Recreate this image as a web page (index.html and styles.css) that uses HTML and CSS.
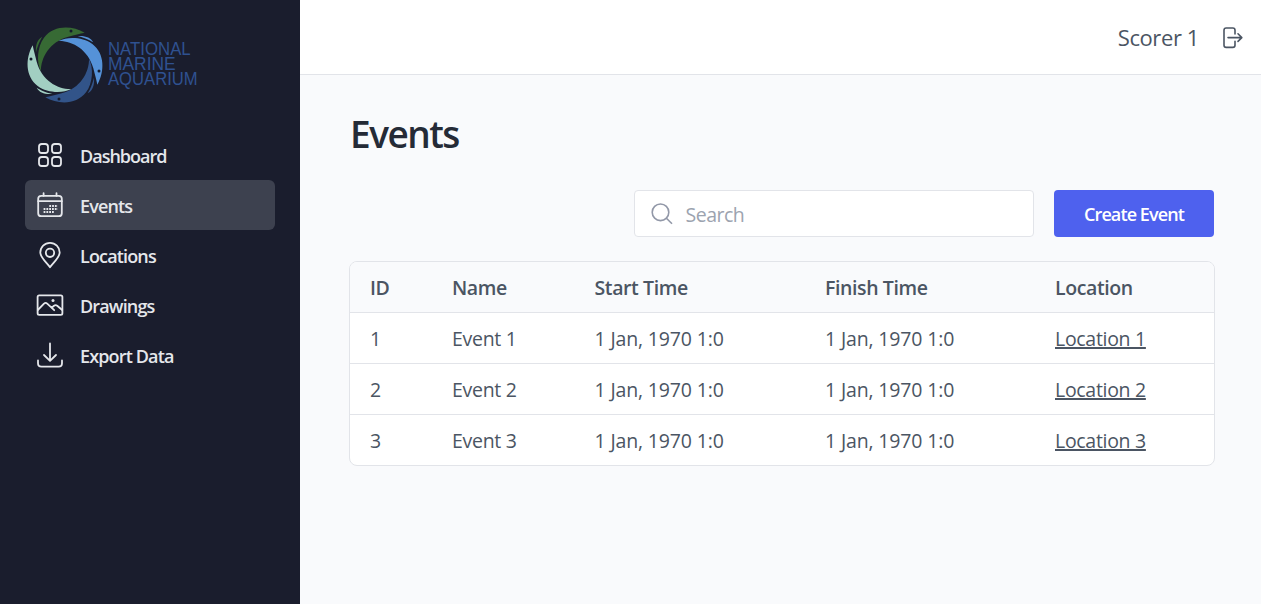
FILE: index.html
```html
<!DOCTYPE html>
<html lang="en">
<head>
<meta charset="utf-8">
<title>Events</title>
<link rel="stylesheet" href="styles.css">
</head>
<body>
<div class="app">
  <aside class="sidebar">
    <svg class="logo" viewBox="0 0 600 300" role="img" aria-label="National Marine Aquarium">
      <defs>
        <g id="fish">
          <path d="M59 -97C20 -119 -34 -120 -63 -82C-84 -54 -86 -8 -72 19C-73 -22 -46 -70 10 -85C30 -90 44 -94 59 -97Z"/>
          <path d="M-87 -38C-89 -60 -83 -77 -68 -85C-76 -72 -81 -60 -87 -38Z"/>
          <circle cx="18" cy="-102" r="4.5" fill="#151a2c"/>
        </g>
      </defs>
      <g transform="translate(150 150)">
        <use href="#fish" fill="#376a34"/>
        <use href="#fish" fill="#5592d8" transform="rotate(90)"/>
        <use href="#fish" fill="#325489" transform="rotate(180)"/>
        <use href="#fish" fill="#a2cfc2" transform="rotate(270)"/>
      </g>
      <g class="logo-text">
        <text x="279" y="120" textLength="248" lengthAdjust="spacingAndGlyphs">NATIONAL</text>
        <text x="279" y="166" textLength="203" lengthAdjust="spacingAndGlyphs">MARINE</text>
        <text x="279" y="211" textLength="269" lengthAdjust="spacingAndGlyphs">AQUARIUM</text>
      </g>
    </svg>
    <nav class="nav">
      <a class="nav-item">
        <svg class="icon" viewBox="0 0 30 30"><rect x="4" y="4" width="9" height="9" rx="2.8"/><rect x="17" y="4" width="9" height="9" rx="2.8"/><rect x="4" y="17" width="9" height="9" rx="2.8"/><rect x="17" y="17" width="9" height="9" rx="2.8"/></svg>
        <span class="w-dashboard">Dashboard</span>
      </a>
      <a class="nav-item active">
        <svg class="icon" viewBox="0 0 30 30"><rect x="3.2" y="5.8" width="23.6" height="20.4" rx="3"/><path d="M3.2 11.2H26.8M8.6 3.2V5.8M21.5 3.2V5.8"/><path class="dots" d="M14.3 16H22.8M8.6 19H22.8M8.6 22H19.8"/></svg>
        <span>Events</span>
      </a>
      <a class="nav-item">
        <svg class="icon" viewBox="0 0 30 30"><path d="M15 27.3C12 23 5.3 17.5 5.3 12.5A9.7 9.7 0 0 1 24.7 12.5C24.7 17.5 18 23 15 27.3Z"/><circle cx="15" cy="12.8" r="4.2"/></svg>
        <span>Locations</span>
      </a>
      <a class="nav-item">
        <svg class="icon" viewBox="0 0 30 30"><rect x="2.6" y="5.3" width="24.8" height="19.6" rx="1.6"/><path d="M2.8 20L9 13.6Q10.6 12.1 12.2 13.6L19.2 20.2M16.6 17.8L19 15.8Q20.6 14.6 22.2 15.7L27.2 20"/><circle class="solid" cx="18" cy="10.5" r="1.5"/></svg>
        <span>Drawings</span>
      </a>
      <a class="nav-item">
        <svg class="icon" viewBox="0 0 30 30"><path d="M15 3.4V20.6M9 15L15 20.8L21 15M3 20.5V23.2Q3 26.6 6.4 26.6H23.6Q27 26.6 27 23.2V20.5"/></svg>
        <span>Export Data</span>
      </a>
    </nav>
  </aside>
  <div class="content">
    <header class="topbar">
      <span class="user">Scorer 1</span>
      <svg class="logout" viewBox="0 0 22 24"><path d="M13 8V4.2Q13 2 10.8 2H4.2Q2 2 2 4.2V19.2Q2 21.4 4.2 21.4H10.8Q13 21.4 13 19.2V15.2M6 11.6H19.6M16 7.8L19.8 11.6L16 15.4"/></svg>
    </header>
    <main class="main">
      <h1 class="title">Events</h1>
      <div class="toolbar">
        <label class="search">
          <svg class="search-icon" viewBox="0 0 22 22"><circle cx="9.5" cy="9.3" r="8.3"/><path d="M15.4 15.2L21 20.8"/></svg>
          <span>Search</span>
        </label>
        <button class="create">Create Event</button>
      </div>
      <div class="table">
        <div class="row head"><span>ID</span><span>Name</span><span>Start Time</span><span>Finish Time</span><span>Location</span></div>
        <div class="row"><span>1</span><span>Event 1</span><span class="date">1 Jan, 1970 1:0</span><span class="date">1 Jan, 1970 1:0</span><a>Location 1</a></div>
        <div class="row"><span>2</span><span>Event 2</span><span class="date">1 Jan, 1970 1:0</span><span class="date">1 Jan, 1970 1:0</span><a>Location 2</a></div>
        <div class="row"><span>3</span><span>Event 3</span><span class="date">1 Jan, 1970 1:0</span><span class="date">1 Jan, 1970 1:0</span><a>Location 3</a></div>
      </div>
    </main>
  </div>
</div>
</body>
</html>
```
FILE: styles.css
```css
* { box-sizing: border-box; }
body {
  margin: 0;
  font-family: "Open Sans", "Noto Sans", sans-serif;
  color: #4b5563;
  background: #f9fafc;
}
.app { display: flex; height: 604px; }
.sidebar {
  width: 300px;
  flex: none;
  padding: 15px 25px 0 15px;
  background: #1a1d2d;
}
.logo { display: block; width: 200px; height: 100px; }
.logo-text {
  font-family: "Liberation Sans", sans-serif;
  font-size: 54px;
  fill: #2f5190;
}
.nav { margin: 15px 0 0 10px; }
.nav-item {
  display: flex;
  align-items: center;
  gap: 15px;
  height: 50px;
  padding: 2px 10px 0;
  border-radius: 6px;
  color: #e5e7eb;
  font-size: 18px;
  font-weight: 600;
  letter-spacing: -0.85px;
}
.w-dashboard { letter-spacing: -1px; }
.active { background: #3d414f; }
.icon {
  width: 30px;
  height: 30px;
  margin-top: -2px;
  fill: none;
  stroke: currentColor;
  stroke-width: 1.8;
  stroke-linecap: round;
  stroke-linejoin: round;
}
.icon .dots { stroke-width: 1.8; stroke-dasharray: 1.8 1; stroke-linecap: butt; }
.icon .solid { fill: currentColor; stroke: none; }
.content { flex: 1; }
.topbar {
  display: flex;
  align-items: center;
  justify-content: flex-end;
  gap: 24px;
  height: 75px;
  padding: 1px 17px 0 0;
  border-bottom: 1px solid #e2e4e9;
  background: #fff;
}
.user { margin: 0 -1px 2px 0; font-size: 22px; letter-spacing: -0.4px; }
.logout {
  width: 22px;
  height: 24px;
  fill: none;
  stroke: #4b5563;
  stroke-width: 1.6;
  stroke-linecap: round;
  stroke-linejoin: round;
}
.main { padding: 29px 46px 0 49px; }
.title {
  margin: 0 0 26px 1px;
  font-size: 37px;
  line-height: 60px;
  font-weight: 600;
  letter-spacing: -1.5px;
  color: #252b37;
}
.toolbar {
  display: flex;
  justify-content: flex-end;
  gap: 20px;
  padding-right: 1px;
  margin-bottom: 24px;
}
.search {
  display: flex;
  align-items: center;
  gap: 13px;
  width: 400px;
  height: 47px;
  padding: 2px 16px 0 15.5px;
  border: 1px solid #e2e4e9;
  border-radius: 4px;
  background: #fff;
  color: #9ca3af;
  font-size: 19.5px;
  letter-spacing: -0.5px;
}
.search-icon {
  width: 22px;
  height: 22px;
  margin-top: -2px;
  fill: none;
  stroke: #9298a8;
  stroke-width: 1.6;
}
.create {
  width: 160px;
  height: 47px;
  padding: 0;
  border: 0;
  border-radius: 4px;
  background: #4e61ee;
  color: #fff;
  font: 600 18px "Open Sans", sans-serif;
  letter-spacing: -0.9px;
}
.table {
  border: 1px solid #e2e4e9;
  border-radius: 8px;
  background: #fff;
  overflow: hidden;
}
.row {
  display: grid;
  grid-template-columns: 82px 142.5px 230.5px 230px 1fr;
  align-items: center;
  height: 51px;
  padding: 0 20px;
  border-bottom: 1px solid #e2e4e9;
  font-size: 19.5px;
  letter-spacing: -0.3px;
}
.row:last-child { height: 50px; border-bottom: 0; }
.date { letter-spacing: -0.15px; }
.head { background: #f9fafc; font-weight: 600; letter-spacing: -0.4px; }
.row a { text-decoration: underline; text-decoration-thickness: 2px; text-underline-offset: 1px; }
```
